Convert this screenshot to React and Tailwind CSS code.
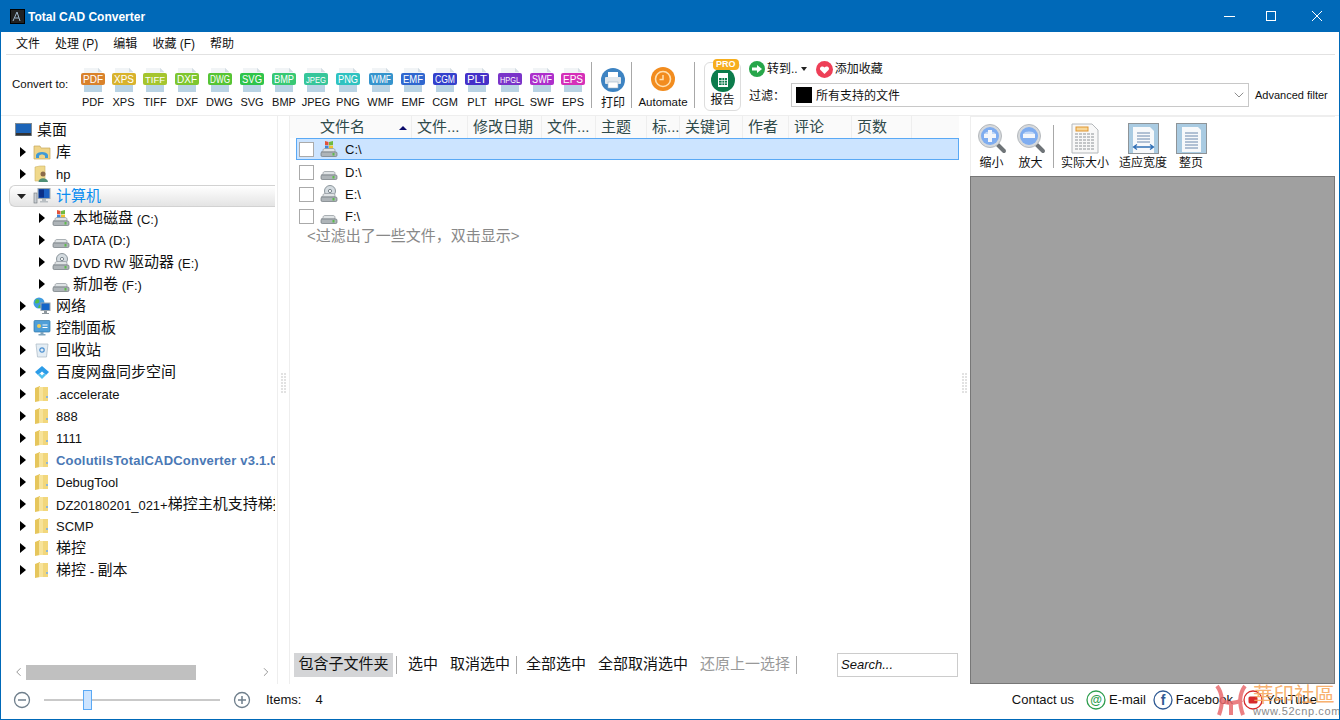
import { ChevronDown, ChevronLeft, ChevronRight } from "lucide-react";

const formats = [
  { name: "PDF", color: "#d9822b", width: "w-[30px]" },
  { name: "XPS", color: "#d8b22c", width: "w-[31px]" },
  { name: "TIFF", color: "#a5c52e", width: "w-[32px]" },
  { name: "DXF", color: "#7ec62f", width: "w-[32px]" },
  { name: "DWG", color: "#56c434", width: "w-[33px]" },
  { name: "SVG", color: "#2fc44a", width: "w-[32px]" },
  { name: "BMP", color: "#38c873", width: "w-[32px]" },
  { name: "JPEG", color: "#36c69a", width: "w-[32px]" },
  { name: "PNG", color: "#2fc2c0", width: "w-[32px]" },
  { name: "WMF", color: "#3594cd", width: "w-[33px]" },
  { name: "EMF", color: "#3067cf", width: "w-[32px]" },
  { name: "CGM", color: "#3340cc", width: "w-[32px]" },
  { name: "PLT", color: "#4530c8", width: "w-[32px]" },
  { name: "HPGL", color: "#7a34c9", width: "w-[33px]" },
  { name: "SWF", color: "#ad2fcb", width: "w-[32px]" },
  { name: "EPS", color: "#d52fb8", width: "w-[30px]" },
];

const treeRows = [
  { label: "库", icon: "library" },
  { label: "hp", icon: "user" },
  { label: "计算机", icon: "computer", open: true, selected: true },
  { label: "本地磁盘 (C:)", icon: "win", level: 2 },
  { label: "DATA (D:)", icon: "drive", level: 2 },
  { label: "DVD RW 驱动器 (E:)", icon: "dvd", level: 2 },
  { label: "新加卷 (F:)", icon: "drive", level: 2 },
  { label: "网络", icon: "network" },
  { label: "控制面板", icon: "panel" },
  { label: "回收站", icon: "bin" },
  { label: "百度网盘同步空间", icon: "baidu" },
  { label: ".accelerate", icon: "folder" },
  { label: "888", icon: "folder" },
  { label: "1111", icon: "folder" },
  { label: "CoolutilsTotalCADConverter v3.1.0.189", icon: "folder", bold: true },
  { label: "DebugTool", icon: "folder" },
  { label: "DZ20180201_021+梯控主机支持梯控卡片", icon: "folder" },
  { label: "SCMP", icon: "folder" },
  { label: "梯控", icon: "folder" },
  { label: "梯控 - 副本", icon: "folder" },
];

const columns = [
  { label: "文件名", width: "w-[92px]", first: true },
  { label: "文件...", width: "w-[56px]" },
  { label: "修改日期", width: "w-[74px]" },
  { label: "文件...", width: "w-[54px]" },
  { label: "主题", width: "w-[51px]" },
  { label: "标...", width: "w-[33px]" },
  { label: "关键词", width: "w-[63px]" },
  { label: "作者", width: "w-[46px]" },
  { label: "评论", width: "w-[63px]" },
  { label: "页数", width: "w-[60px]" },
];

const drives = [
  { label: "C:\\", icon: "win", selected: true },
  { label: "D:\\", icon: "drive" },
  { label: "E:\\", icon: "dvd" },
  { label: "F:\\", icon: "drive" },
];

function FormatIcon({ name, color }) {
  return (
    <svg width="26" height="24" viewBox="0 0 26 24">
      <path d="M4 0h14l4 4v20H4z" fill="#b9d3e4" />
      <path d="M4 0h14l4 4v6H4z" fill="#f1f4f6" />
      <path d="M18 0l4 4h-4z" fill="#d5dde3" />
      <rect x="1" y="5" width="24" height="12" rx="2" fill={color} />
      <text
        x="13"
        y="14.500"
        textAnchor="middle"
        fontSize={name.length > 3 ? "9" : "10"}
        fill="#fff"
        fontFamily="Liberation Sans, sans-serif"
        textLength="20"
        lengthAdjust="spacingAndGlyphs"
      >
        {name}
      </text>
    </svg>
  );
}

function Folder() {
  return (
    <svg width="16" height="18" viewBox="0 0 16 18">
      <path d="M1 3l5-2v15l-5 1z" fill="#e6c65c" />
      <path d="M5 2h9v14H5z" fill="#f7e39a" />
      <path d="M9 2h5v14H9z" fill="#f2d77c" />
      <path d="M12 11h2v2h-2z" fill="#8fb7d6" />
    </svg>
  );
}

function Drive({ kind }) {
  return (
    <svg width="18" height="18" viewBox="0 0 18 18">
      {kind === "win" && (
        <g>
          <path d="M5 1l3.500 1v3.500L5 5z" fill="#e2533a" />
          <path d="M9 2l4-1v4l-4 .5z" fill="#6fb93f" />
          <path d="M5 5.500L8.500 6v3.500L5 9z" fill="#3f86d8" />
          <path d="M9 6l4-.5V9l-4 .5z" fill="#f1c22f" />
        </g>
      )}
      {kind === "dvd" && (
        <g>
          <circle cx="10" cy="6" r="5.500" fill="#d4dbe0" stroke="#8c969c" />
          <circle cx="10" cy="6" r="1.600" fill="#fff" stroke="#7b868d" />
        </g>
      )}
      <path d="M3 10.500C3 9 4 8.500 5 8.500h8c1 0 2 .5 2 2V12H1.500z" fill="#dfe3e5" stroke="#8d9499" strokeWidth=".7" />
      <rect x="1" y="12" width="16" height="4.500" rx="1.200" fill="#aeb4b8" stroke="#6f777c" strokeWidth=".7" />
      <rect x="12.500" y="13" width="2" height="2.500" fill="#5dbb4c" />
    </svg>
  );
}

function TreeIcon({ name }) {
  if (name === "folder") return <Folder />;
  if (name === "win" || name === "drive" || name === "dvd") return <Drive kind={name} />;
  if (name === "library")
    return (
      <svg width="18" height="18" viewBox="0 0 18 18">
        <path d="M1 3h6l1 2h9v11H1z" fill="#efd489" stroke="#c6a85a" strokeWidth=".7" />
        <path d="M3 15v-3c1-4 11-4 12 0v3h-3v-2c-1-2-5-2-6 0v2z" fill="#3f9ad6" />
      </svg>
    );
  if (name === "user")
    return (
      <svg width="18" height="18" viewBox="0 0 18 18">
        <path d="M2 2l5-1h5v15H2z" fill="#f0d98c" stroke="#cdb164" strokeWidth=".6" />
        <circle cx="10" cy="9" r="2.500" fill="#8a6a4a" />
        <path d="M5.500 17c0-5 9-5 9.500 0z" fill="#4f8f75" />
      </svg>
    );
  if (name === "computer")
    return (
      <svg width="18" height="18" viewBox="0 0 18 18">
        <rect x="1" y="6" width="3" height="10" fill="#c9ced2" stroke="#6d7478" strokeWidth=".6" />
        <rect x="5" y="1.500" width="12" height="10" fill="#1b5fc1" stroke="#9fa8ae" />
        <path d="M6 2.500h5v8H6z" fill="#0b2f86" />
        <path d="M9 12h4v2h2v1.500H7V14h2z" fill="#b8bec2" />
      </svg>
    );
  if (name === "network")
    return (
      <svg width="18" height="18" viewBox="0 0 18 18">
        <circle cx="6" cy="6" r="5.500" fill="#3f9be0" />
        <path d="M3 2.500c3-1 4 1 3 3-2 1.500-4 1-4 0zM6 8c2 0 2 1.500 1 3H5z" fill="#4fbe4a" />
        <rect x="8" y="6" width="9" height="7.500" fill="#1565c8" stroke="#9aa5ad" />
        <path d="M11 14h3v2h2v1h-7v-1h2z" fill="#8e979d" />
      </svg>
    );
  if (name === "panel")
    return (
      <svg width="18" height="18" viewBox="0 0 18 18">
        <rect x="1" y="1.500" width="16" height="11.500" rx="1" fill="#4f9fd8" stroke="#2f77aa" strokeWidth=".7" />
        <circle cx="6" cy="7" r="2" fill="#f2cf5b" />
        <path d="M9.500 5.500h5v1h-5zM9.500 8h5v1h-5z" fill="#fff" />
        <path d="M7.500 13h3v2h2v1.500h-7V15h2z" fill="#7fa4bd" />
      </svg>
    );
  if (name === "bin")
    return (
      <svg width="18" height="18" viewBox="0 0 18 18">
        <path d="M3 3h12l-1.500 13h-9z" fill="#e4edf4" stroke="#a9b8c3" strokeWidth=".7" />
        <circle cx="9" cy="9" r="2.200" fill="none" stroke="#4b8fd0" strokeWidth="1.200" />
      </svg>
    );
  return (
    <svg width="18" height="18" viewBox="0 0 18 18">
      <path d="M9 3l7 6-3 3-4-3.500L5 12 2 9z" fill="#2c9ce8" />
      <path d="M9 16l-4-4 2-1.500 2 2 2-2 2 1.500z" fill="#4fc0ef" />
    </svg>
  );
}

function Arrow({ open }) {
  if (open) {
    return (
      <svg width="10" height="10" viewBox="0 0 10 10">
        <path d="M0 3h9L4.500 8z" fill="#222" />
      </svg>
    );
  }
  return (
    <svg width="6" height="10" viewBox="0 0 6 10">
      <path d="M0 0l6 5-6 5z" fill="#000" />
    </svg>
  );
}

// chinese runs are a size bigger than the latin ones in the tree
function MixedLabel({ text }) {
  return text.split(/([\u4e00-\u9fa5]+)/).map((part, i) =>
    /[\u4e00-\u9fa5]/.test(part) ? (
      <span key={i} className="text-[15px]">
        {part}
      </span>
    ) : (
      <span key={i} className="relative top-px">
        {part}
      </span>
    ),
  );
}

function TreeRow({ row }) {
  const second = row.level === 2;
  return (
    <div
      className={`flex h-[22px] items-center rounded-l-md whitespace-nowrap ${
        row.selected ? "border border-r-0 border-[#d2d2d2] bg-gradient-to-b from-white to-[#e4e4e4]" : ""
      } ${second ? "pl-[26px]" : row.open ? "pl-[5px]" : "pl-[7px]"}`}
    >
      <span className={`flex shrink-0 justify-center ${row.open ? "w-[14px]" : "w-[13px]"}`}>
        <Arrow open={row.open} />
      </span>
      <span className="flex w-[24px] shrink-0 justify-center pl-[2px]">
        <TreeIcon name={row.icon} />
      </span>
      <span
        className={`${row.selected ? "text-[#0a8ef0]" : ""} ${row.bold ? "font-bold tracking-[.2px] text-[#4a78b5]" : ""} ${
          second ? "ml-[1px]" : "ml-[3px]"
        }`}
      >
        <MixedLabel text={row.label} />
      </span>
    </div>
  );
}

function ViewButton({ label, children, width }) {
  return (
    <div className={`flex flex-col items-center ${width}`}>
      <div className="flex h-[33px] items-center">{children}</div>
      <span className="text-[12px] leading-[16px] whitespace-nowrap">{label}</span>
    </div>
  );
}

function Magnifier({ minus }) {
  return (
    <svg width="30" height="31" viewBox="0 0 30 31">
      <path d="M19 20l8 8" stroke="#6f7478" strokeWidth="4" strokeLinecap="round" />
      <circle cx="13" cy="13" r="11.500" fill="#d6d9dc" stroke="#b5b9bd" />
      <circle cx="13" cy="13" r="9" fill="#7fadf0" />
      <path d="M7 11a6.500 4 0 0 1 12 0z" fill="#c0d7f7" />
      <rect x="7" y="11" width="12" height="4" fill="#f3f6fb" />
      {!minus && <rect x="11" y="7" width="4" height="12" fill="#f3f6fb" />}
    </svg>
  );
}

function PageIcon({ type }) {
  if (type === "actual") {
    return (
      <svg width="28" height="31" viewBox="0 0 28 31">
        <path d="M1 1h20l6 6v23H1z" fill="#f8f8f8" stroke="#b4b8bb" />
        <rect x="5" y="4" width="12" height="4" fill="#f7d79a" stroke="#e0952e" />
        <path d="M4 11h20M4 14h20M4 17h20M4 20h20M4 23h20M4 26h20" stroke="#8d9296" strokeDasharray="3 1" />
      </svg>
    );
  }
  return (
    <svg width="31" height="31" viewBox="0 0 31 31">
      <rect x=".5" y=".5" width="30" height="30" fill="#a9cbe2" stroke="#8e9498" />
      <path d={type === "width" ? "M5 4h17l4 4v22H5z" : "M6 4h16l3 3v22H6z"} fill="#f7f9fb" />
      <path d="M9 10h13M9 13h13M9 16h13M9 19h13" stroke="#6a88ad" />
      {type === "width" && <path d="M6 24h19M9 21.500L5.500 24 9 26.500M22 21.500l3.500 2.500-3.500 2.500" stroke="#2f6fb5" fill="none" strokeWidth="1.300" />}
      {type === "page" && <path d="M9 22h13M9 25h13" stroke="#6a88ad" />}
    </svg>
  );
}

function RoundIcon({ label, color, className, children }) {
  return (
    <div className={`flex items-center gap-[3px] ${className}`}>
      <svg width="20" height="20" viewBox="0 0 20 20">
        <circle cx="10" cy="10" r="9" fill="none" stroke={color} strokeWidth="1.300" />
        {children}
      </svg>
      <span>{label}</span>
    </div>
  );
}

function Grip() {
  return (
    <div className="mx-auto grid w-[5px] grid-cols-2 gap-[1px]">
      {Array.from({ length: 14 }).map((_, i) => (
        <span key={i} className="h-[2px] w-[2px] bg-[#e2e2e2]" />
      ))}
    </div>
  );
}

function Sep() {
  return <div className="h-[46px] w-px shrink-0 bg-[#a8a8a8]" />;
}

export default function App() {
  return (
    <div
      className="relative flex h-[720px] w-[1340px] flex-col overflow-hidden border-x border-b border-[#0069b8] bg-white text-[13px] text-[#111]"
      style={{ fontFamily: '"Liberation Sans", "Noto Sans CJK SC", sans-serif' }}
    >
      {/* title bar */}
      <div className="-mx-px flex h-8 shrink-0 items-center bg-[#0069b8] pl-[10px] text-white">
        <svg width="15" height="15" viewBox="0 0 15 15">
          <rect x=".5" y=".5" width="14" height="14" fill="#222" stroke="#000" />
          <path d="M3 12L7 3l3 9M5 9h4" stroke="#9fb8cf" fill="none" />
        </svg>
        <span className="ml-[3px] pt-[1px] text-[12px] font-bold">Total CAD Converter</span>
        <svg width="116" height="12" viewBox="0 0 116 12" className="ml-auto">
          <path d="M0 6.500h11" stroke="#fff" />
          <rect x="42.500" y="1.500" width="9" height="9" fill="none" stroke="#fff" />
          <path d="M88 1l10 10M98 1L88 11" stroke="#fff" />
        </svg>
      </div>

      {/* menu */}
      <div className="mr-[4px] ml-[5px] flex h-[23px] shrink-0 items-center gap-[15px] border-b border-[#e2e2e2] pt-[2px] pl-[10px] text-[12px]">
        <span>文件</span>
        <span>处理 (P)</span>
        <span>编辑</span>
        <span>收藏 (F)</span>
        <span>帮助</span>
      </div>

      {/* toolbar */}
      <div className="flex h-[61px] shrink-0 items-center border-b border-[#eeeeee] pl-[11px] text-[12px]">
        <span className="w-[66px] text-[11.500px]">Convert to:</span>
        <div className="mt-[6px] flex">
          {formats.map((f) => (
            <div key={f.name} className={`flex shrink-0 flex-col items-center ${f.width}`}>
              <FormatIcon name={f.name} color={f.color} />
              <span className="mt-[3px] text-[11px] leading-[14px]">{f.name}</span>
            </div>
          ))}
        </div>
        <div className="ml-[3px]">
          <Sep />
        </div>
        <div className="mt-[7px] ml-[3px] flex w-[36px] flex-col items-center">
          <svg width="26" height="26" viewBox="0 0 26 26">
            <circle cx="13" cy="13" r="12" fill="#3d83c2" />
            <rect x="8" y="5" width="10" height="5" fill="#fff" />
            <rect x="5" y="10" width="16" height="7" rx="1" fill="#dfe6ec" />
            <rect x="8" y="15" width="10" height="6" fill="#fff" stroke="#9fb3c4" strokeWidth=".6" />
          </svg>
          <span className="mt-[2px] leading-[16px]">打印</span>
        </div>
        <Sep />
        <div className="mt-[6px] ml-[2px] flex w-[58px] flex-col items-center">
          <svg width="26" height="26" viewBox="0 0 26 26">
            <circle cx="13" cy="13" r="12" fill="#f28c1e" />
            <circle cx="13" cy="13" r="7.500" fill="none" stroke="#ffe0b0" strokeWidth="1.600" />
            <path d="M13 9v4.500h-3.500" fill="none" stroke="#ffe0b0" strokeWidth="1.500" />
          </svg>
          <span className="mt-[2px] text-[11.500px] leading-[16px] whitespace-nowrap">Automate</span>
        </div>
        <div className="ml-[2px]">
          <Sep />
        </div>
        <div className="relative mt-[3px] ml-[9px] flex h-[49px] w-[37px] shrink-0 flex-col items-center justify-end rounded-md border border-[#dddddd] pb-[1px]">
          <span className="absolute top-[-4px] left-[8px] rounded-sm bg-[#f7ae1d] px-[3px] text-[9px] leading-[11px] font-bold text-white">PRO</span>
          <svg width="24" height="24" viewBox="0 0 24 24">
            <circle cx="12" cy="12" r="12" fill="#0c7c4c" />
            <rect x="7" y="5" width="10" height="14" fill="#fff" />
            <path d="M8 10h8v7H8z" fill="#0c7c4c" />
            <path d="M8 12.500h8M8 15h8M11 10v7M13.500 10v7" stroke="#fff" strokeWidth=".7" />
          </svg>
          <span className="leading-[17px]">报告</span>
        </div>

        <div className="mt-[-4px] ml-[8px] flex w-[590px] shrink-0 flex-col gap-[4px]">
          <div className="flex h-[20px] items-center">
            <svg width="16" height="16" viewBox="0 0 16 16">
              <circle cx="8" cy="8" r="8" fill="#27a64a" />
              <path d="M3 6.500h5V4l5 4-5 4V9.500H3z" fill="#fff" />
            </svg>
            <span className="ml-[2px]">转到..</span>
            <svg width="6" height="4" viewBox="0 0 6 4" className="ml-[3px]">
              <path d="M0 0h6L3 4z" fill="#222" />
            </svg>
            <svg width="17" height="17" viewBox="0 0 17 17" className="ml-[9px]">
              <circle cx="8.500" cy="8.500" r="8.500" fill="#ee3f57" />
              <path d="M8.500 13L4.500 9c-2-2.500 2-5 4-2.500 2-2.500 6 0 4 2.500z" fill="#fff" />
            </svg>
            <span className="ml-[2px]">添加收藏</span>
          </div>
          <div className="flex h-[24px] items-center">
            <span className="w-[42px] pt-[2px]">过滤：</span>
            <div className="flex h-[24px] w-[458px] shrink-0 items-center border border-[#c8c8c8] pr-[1px] pl-[4px]">
              <span className="h-4 w-4 bg-black" />
              <span className="ml-[4px] pt-[2px]">所有支持的文件</span>
              <ChevronDown size={16} strokeWidth={1} className="ml-auto text-[#555]" />
            </div>
            <span className="ml-[6px] pt-[1px] text-[11px] whitespace-nowrap">Advanced filter</span>
          </div>
        </div>
      </div>

      {/* panels */}
      <div className="flex min-h-0 flex-1">
        <div className="flex w-[277px] shrink-0 flex-col border-r border-[#eeeeee] pl-[8px]">
          <div className="min-h-0 w-[266px] flex-1 overflow-hidden pt-[3px]">
            <div className="flex h-[22px] items-center pl-[6px] text-[15px]">
              <svg width="17" height="14" viewBox="0 0 17 14">
                <rect x=".5" y=".5" width="16" height="12" fill="#1c64b8" stroke="#7e8a93" />
                <rect x="1" y="10" width="15" height="2.500" fill="#333" />
              </svg>
              <span className="ml-[5px]">桌面</span>
            </div>
            {treeRows.map((row) => (
              <TreeRow key={row.label} row={row} />
            ))}
          </div>
          <div className="mb-[4px] flex h-[16px] w-[266px] items-center text-[#777]">
            <ChevronLeft size={14} strokeWidth={1.3} className="ml-[2px] w-[15px]" />
            <div className="h-[15px] w-[170px] bg-[#c0c0c0]" />
            <ChevronRight size={14} strokeWidth={1.3} className="ml-[63px]" />
          </div>
        </div>

        <div className="flex w-[12px] shrink-0 items-center border-r border-[#eeeeee]">
          <div className="mb-[35px] w-full">
            <Grip />
          </div>
        </div>

        <div className="flex w-[669px] shrink-0 flex-col">
          <div className="flex h-[22px] shrink-0 items-center bg-[#fafafa] pl-[30px] text-[15px] text-[#2f4a4a]">
            {columns.map((c) => (
              <div key={c.label + c.width} className={`flex h-full shrink-0 items-center border-r border-[#eeeeee] pt-[1px] ${c.width} ${c.first ? "" : "pl-[5px]"}`}>
                <span className="whitespace-nowrap">{c.label}</span>
                {c.first && (
                  <svg width="8" height="4" viewBox="0 0 8 4" className="mr-[4px] ml-auto">
                    <path d="M0 4h8L4 0z" fill="#0a0a6a" />
                  </svg>
                )}
              </div>
            ))}
          </div>
          <div className="min-h-0 flex-1 pl-[6px]">
            {drives.map((d) => (
              <div
                key={d.label}
                className={`flex h-[22px] items-center pl-[2px] ${d.selected ? "mb-px border border-[#5aa9f5] bg-[#cce4ff]" : "border border-transparent"}`}
              >
                <span className="h-[15px] w-[15px] border border-[#aaaaaa] bg-white" />
                <span className="ml-[6px]">
                  <Drive kind={d.icon} />
                </span>
                <span className="ml-[7px] pt-[2px]">{d.label}</span>
              </div>
            ))}
            <div className="flex h-[19px] items-center pl-[11px] text-[15px] whitespace-nowrap text-[#888888]">&lt;过滤出了一些文件，双击显示&gt;</div>
          </div>
          <div className="mb-[7px] flex h-[25px] shrink-0 items-center pr-[1px] pl-[4px] text-[15px] whitespace-nowrap">
            <span className="flex h-[24px] w-[99px] items-center justify-center bg-[#d4d5d7]">包含子文件夹</span>
            <span className="ml-[3px] h-[18px] w-px bg-[#aaaaaa]" />
            <span className="ml-[11px]">选中</span>
            <span className="ml-[12px]">取消选中</span>
            <span className="ml-[6px] h-[18px] w-px bg-[#aaaaaa]" />
            <span className="ml-[9px]">全部选中</span>
            <span className="ml-[12px]">全部取消选中</span>
            <span className="ml-[12px] text-[#999999]">还原上一选择</span>
            <span className="ml-[6px] h-[18px] w-px bg-[#aaaaaa]" />
            <div className="ml-auto flex h-[24px] w-[121px] items-center border border-[#cccccc] pl-[3px] text-[13px] italic">Search...</div>
          </div>
        </div>

        <div className="flex w-[11px] shrink-0 items-center">
          <div className="mb-[35px] w-full">
            <Grip />
          </div>
        </div>

        <div className="flex w-[365px] shrink-0 flex-col">
          <div className="flex h-[60px] shrink-0 items-center border-t border-l border-[#eeeeee] pb-[1px] pl-[1px]">
            <ViewButton label="缩小" width="w-[39px]">
              <Magnifier />
            </ViewButton>
            <ViewButton label="放大" width="w-[39px]">
              <Magnifier minus />
            </ViewButton>
            <span className="ml-[3px] h-[43px] w-px bg-[#a8a8a8]" />
            <ViewButton label="实际大小" width="w-[58px] ml-[2px]">
              <PageIcon type="actual" />
            </ViewButton>
            <ViewButton label="适应宽度" width="w-[58px]">
              <PageIcon type="width" />
            </ViewButton>
            <ViewButton label="整页" width="w-[38px]">
              <PageIcon type="page" />
            </ViewButton>
          </div>
          <div className="min-h-0 flex-1 border border-[#777777] bg-[#a0a0a0]" />
        </div>
      </div>

      {/* status bar */}
      <div className="flex h-[35px] shrink-0 items-center pb-[4px] pl-[12px]">
        <svg width="18" height="18" viewBox="0 0 18 18">
          <circle cx="9" cy="9" r="7.500" fill="none" stroke="#6f7f8c" strokeWidth="1.300" />
          <path d="M5 9h8" stroke="#6f7f8c" strokeWidth="1.500" />
        </svg>
        <div className="relative ml-[13px] h-[2px] w-[176px] bg-[#c9c9c9]">
          <span className="absolute top-[-9px] left-[39px] h-[20px] w-[9px] border border-[#5aa9f5] bg-[#cce4ff]" />
        </div>
        <svg width="18" height="18" viewBox="0 0 18 18" className="ml-[13px]">
          <circle cx="9" cy="9" r="7.500" fill="none" stroke="#6f7f8c" strokeWidth="1.300" />
          <path d="M5 9h8M9 5v8" stroke="#6f7f8c" strokeWidth="1.500" />
        </svg>
        <span className="ml-[15px]">Items:</span>
        <span className="ml-[14px]">4</span>
        <div className="ml-auto flex items-center pr-[22px]">
          <span>Contact us</span>
          <RoundIcon label="E-mail" color="#2f9e4f" className="ml-[12px]">
            <text x="10" y="14" textAnchor="middle" fontSize="12" fontWeight="bold" fill="#2f9e4f" fontFamily="Liberation Sans, sans-serif">
              @
            </text>
          </RoundIcon>
          <RoundIcon label="Facebook" color="#2f5a94" className="ml-[7px]">
            <text x="10" y="15" textAnchor="middle" fontSize="14" fontWeight="bold" fill="#2f5a94" fontFamily="Liberation Sans, sans-serif">
              f
            </text>
          </RoundIcon>
          <RoundIcon label="YouTube" color="#d62a2a" className="ml-[10px]">
            <rect x="5.500" y="6.500" width="9" height="7" rx="1.500" fill="#d62a2a" />
          </RoundIcon>
        </div>
      </div>

      {/* forum watermark */}
      <div className="absolute right-[3px] bottom-[2px] flex h-[34px] items-end">
        <svg width="36" height="33" viewBox="0 0 36 33" className="mr-[4px]">
          <path d="M4 2c6 8 6 18 2 29M32 2c-6 8-6 18-2 29M7 16c7 4 15 4 22 0M18 18v13" fill="none" stroke="#e8686c" strokeOpacity=".85" strokeWidth="4" />
        </svg>
        <div className="flex w-[83px] flex-col">
          <span className="text-[20.500px] leading-[23px] whitespace-nowrap text-[#f7a85c]/90">華印社區</span>
          <span className="text-[11px] leading-[11px] tracking-[.6px] whitespace-nowrap text-[#8a8a8a]">www.52cnp.com</span>
        </div>
      </div>
    </div>
  );
}
